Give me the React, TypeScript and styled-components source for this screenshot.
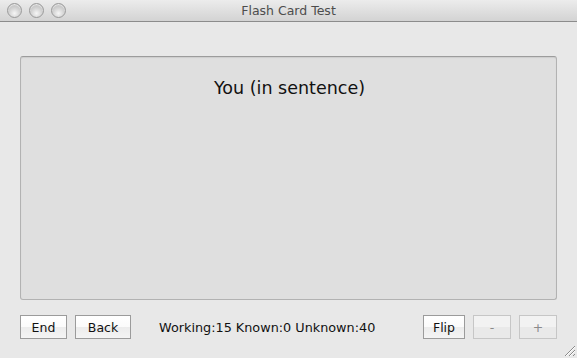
import styled, { createGlobalStyle } from 'styled-components';

const GlobalStyle = createGlobalStyle`
  html, body {
    margin: 0;
    padding: 0;
    background: #e8e8e8;
  }
  * {
    box-sizing: border-box;
  }
`;

const Window = styled.div`
  width: 577px;
  height: 358px;
  display: flex;
  flex-direction: column;
  background: #e8e8e8;
  font-family: "Lucida Grande", "DejaVu Sans", sans-serif;
  position: relative;
  overflow: hidden;
`;

const TitleBar = styled.div`
  height: 22px;
  flex: none;
  display: flex;
  align-items: center;
  position: relative;
  padding-left: 7px;
  background: linear-gradient(#ececec, #d3d3d3);
  border-bottom: 1px solid #8c8c8c;
`;

const Lights = styled.div`
  display: flex;
  gap: 7px;
`;

const Light = styled.span`
  width: 15px;
  height: 15px;
  border-radius: 50%;
  border: 1px solid #9a9a9a;
  background: radial-gradient(circle at 50% 72%, #f6f6f6 0%, #d4d4d4 45%, #b2b2b2 100%);
  box-shadow: inset 0 1px 1px rgba(255, 255, 255, 0.7);
`;

const Title = styled.div`
  position: absolute;
  left: 0;
  right: 0;
  top: 0;
  height: 22px;
  line-height: 22px;
  text-align: center;
  font-size: 12.5px;
  color: #4d4d4d;
  pointer-events: none;
`;

const Body = styled.div`
  flex: 1;
  display: flex;
  flex-direction: column;
  padding: 34px 20px 0 20px;
`;

const Card = styled.div`
  height: 244px;
  border: 1px solid #b2b2b2;
  border-top-color: #9c9c9c;
  border-radius: 3px;
  background: #dfdfdf;
  box-shadow: inset 0 1px 1px rgba(0, 0, 0, 0.08);
  display: flex;
  justify-content: center;
  padding-top: 20px;
`;

const CardText = styled.div`
  font-size: 17.5px;
  color: #111;
  line-height: 22px;
  padding-left: 2px;
`;

const Controls = styled.div`
  margin-top: 15px;
  display: flex;
  align-items: center;
  height: 24px;
`;

const Button = styled.button<{ $w: number; $disabled?: boolean }>`
  width: ${p => p.$w}px;
  height: 24px;
  padding: 0;
  font-family: inherit;
  font-size: 12.5px;
  color: ${p => (p.$disabled ? '#8a8a8a' : '#111')};
  border: 1px solid ${p => (p.$disabled ? '#c6c6c6' : '#9b9b9b')};
  border-radius: 0;
  background: ${p =>
    p.$disabled
      ? 'linear-gradient(#f2f2f2 0%, #f2f2f2 50%, #e9e9e9 50%, #e9e9e9 100%)'
      : 'linear-gradient(#ffffff 0%, #fbfbfb 50%, #ececec 50%, #f4f4f4 100%)'};
`;

const Gap = styled.div<{ $w: number }>`
  width: ${p => p.$w}px;
  flex: none;
`;

const Stats = styled.div`
  flex: 1;
  padding-left: 28px;
  font-size: 12.8px;
  color: #111;
  white-space: nowrap;
`;

const Grip = styled.svg`
  position: absolute;
  right: 1px;
  bottom: 1px;
`;

export default function App() {
  return (
    <>
      <GlobalStyle />
      <Window>
        <TitleBar>
          <Lights>
            <Light />
            <Light />
            <Light />
          </Lights>
          <Title>Flash Card Test</Title>
        </TitleBar>
        <Body>
          <Card>
            <CardText>You (in sentence)</CardText>
          </Card>
          <Controls>
            <Button $w={47}>End</Button>
            <Gap $w={8} />
            <Button $w={56}>Back</Button>
            <Stats>Working:15 Known:0 Unknown:40</Stats>
            <Button $w={42}>Flip</Button>
            <Gap $w={8} />
            <Button $w={38} $disabled>-</Button>
            <Gap $w={8} />
            <Button $w={38} $disabled>+</Button>
          </Controls>
        </Body>
        <Grip width="14" height="14" viewBox="0 0 14 14">
          <g stroke="#8a8a8a" strokeWidth="1">
            <line x1="13" y1="3" x2="3" y2="13" />
            <line x1="13" y1="7" x2="7" y2="13" />
            <line x1="13" y1="11" x2="11" y2="13" />
          </g>
          <g stroke="#ffffff" strokeWidth="1">
            <line x1="13" y1="4" x2="4" y2="13" />
            <line x1="13" y1="8" x2="8" y2="13" />
          </g>
        </Grip>
      </Window>
    </>
  );
}
